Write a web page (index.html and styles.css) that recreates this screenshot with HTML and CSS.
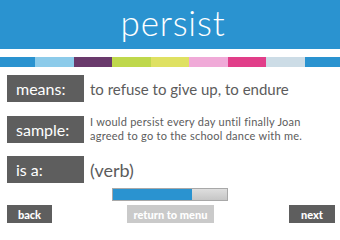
FILE: index.html
```html
<!DOCTYPE html>
<html>
<head>
<meta charset="utf-8">
<link rel="stylesheet" href="styles.css">
</head>
<body>
<header class="header"><h1 class="word">persist</h1></header>
<div class="strip">
  <span class="seg c1 edge"></span>
  <span class="seg c2"></span>
  <span class="seg c3"></span>
  <span class="seg c4"></span>
  <span class="seg c5"></span>
  <span class="seg c6"></span>
  <span class="seg c7"></span>
  <span class="seg c8"></span>
  <span class="seg c1 edge"></span>
</div>
<main class="rows">
  <div class="row"><div class="label">means:</div><div class="value big">to refuse to give up, to endure</div></div>
  <div class="row"><div class="label">sample:</div><div class="value small">I would persist every day until finally Joan<br>agreed to go to the school dance with me.</div></div>
  <div class="row"><div class="label">is a:</div><div class="value verb">(verb)</div></div>
</main>
<div class="progress"><div class="fill" style="width:69%"></div></div>
<nav class="nav">
  <button class="btn dark back">back</button>
  <button class="btn light menu">return to menu</button>
  <button class="btn dark next">next</button>
</nav>
</body>
</html>
```
FILE: styles.css
```css
html, body { margin: 0; padding: 0; }
body {
  width: 340px;
  height: 227px;
  overflow: hidden;
  background: #ffffff;
  font-family: "Lato", "Open Sans", sans-serif;
}
.header {
  height: 49px;
  background: #2a93d0;
  display: flex;
  align-items: center;
  justify-content: center;
}
.word {
  margin: 0;
  color: #ffffff;
  font-weight: 300;
  font-size: 35px;
  letter-spacing: 0.8px;
  line-height: 1;
  padding-bottom: 4px;
  padding-left: 6px;
}
.strip {
  margin-top: 8px;
  height: 10px;
  display: flex;
}
.seg { flex: 0 0 38.5px; height: 100%; }
.seg.edge { flex: 0 0 35px; }
.c1 { background: #2a93d0; }
.c2 { background: #8ccbea; }
.c3 { background: #6a3a6c; }
.c4 { background: #bfd84c; }
.c5 { background: #dfe162; }
.c6 { background: #f0aad8; }
.c7 { background: #e13e89; }
.c8 { background: #ccdce6; }
.rows {
  margin-top: 8px;
  display: flex;
  flex-direction: column;
  gap: 13px;
  padding-left: 7px;
}
.row {
  display: flex;
  align-items: center;
  gap: 6px;
}
.label {
  width: 68px;
  height: 27px;
  padding-left: 9px;
  background: #5e5e5e;
  color: #ffffff;
  font-size: 16px;
  line-height: 27px;
  box-sizing: content-box;
}
.value { color: #5c5c5c; }
.big { font-size: 15px; }
.small { font-size: 11px; line-height: 14px; letter-spacing: 0.25px; }
.verb { font-size: 18px; }
.progress {
  margin: 5px auto 0;
  width: 116px;
  height: 13px;
  box-sizing: border-box;
  border: 1px solid #a8a8a8;
  background: linear-gradient(#dedede, #c6c6c6);
  display: flex;
}
.fill { height: 100%; background: #2a93d0; }
.nav {
  margin-top: 4px;
  display: flex;
  justify-content: space-between;
  padding: 0 5px 0 7px;
}
.btn {
  height: 18px;
  border: none;
  padding: 0;
  color: #ffffff;
  font-family: "Lato", "Open Sans", sans-serif;
  font-weight: 900;
  font-size: 11px;
}
.dark { background: #5e5e5e; }
.light { background: #cacaca; }
.back { width: 45px; }
.menu { width: 87px; }
.next { width: 46px; }
```
